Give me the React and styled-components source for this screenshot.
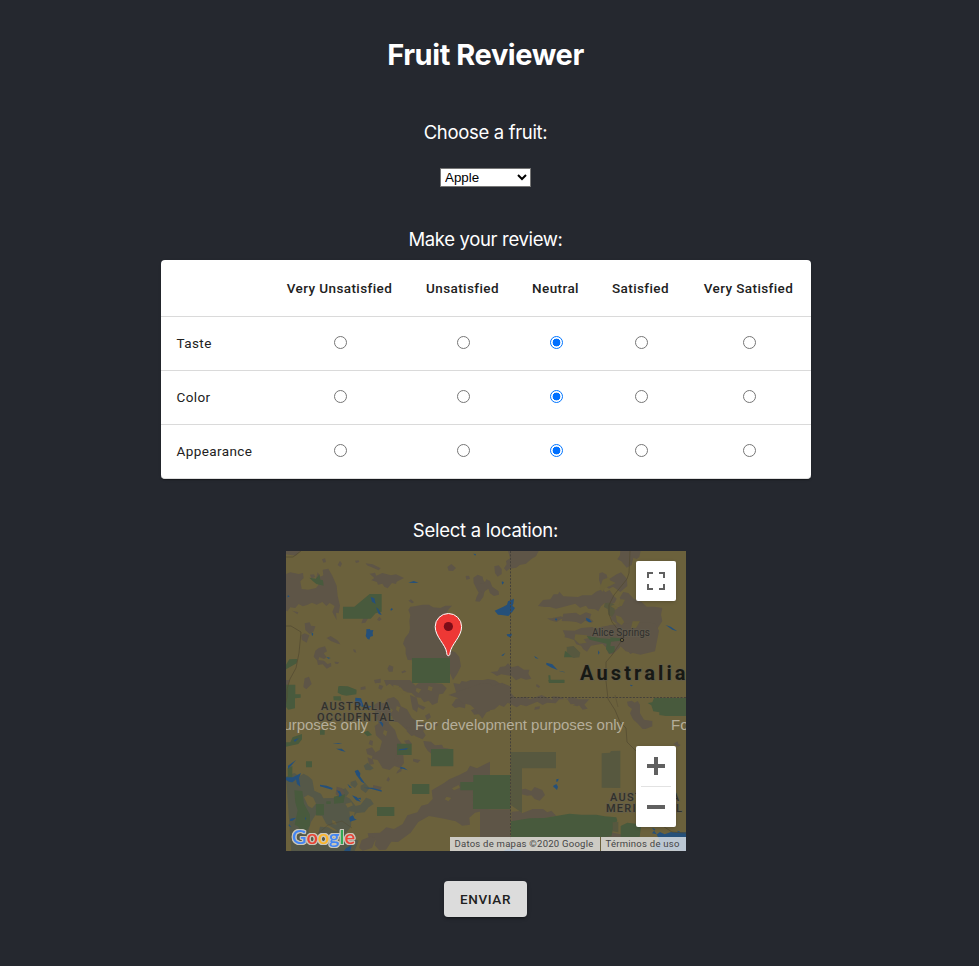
import React, { useState } from 'react';
import styled, { createGlobalStyle } from 'styled-components';

const GlobalStyle = createGlobalStyle`
  * { box-sizing: border-box; }
  html, body { margin: 0; background: #25282f; }
`;

const Page = styled.main`
  width: 971px;
  height: 966px;
  padding-top: 36px;
  display: flex;
  flex-direction: column;
  align-items: center;
  color: #fff;
  background: #25282f;
  font-family: Inter, sans-serif;
`;

const Title = styled.h1`
  margin: 0;
  height: 38px;
  font-size: 29px;
  line-height: 38px;
  font-weight: 700;
  letter-spacing: -0.42px;
  white-space: nowrap;
`;

const Label = styled.h2`
  margin: ${(p) => p.$top}px 0 0;
  height: 24px;
  font-size: 18.5px;
  line-height: 23px;
  font-weight: 400;
  letter-spacing: ${(p) => p.$tracking}px;
  white-space: nowrap;
`;

const FruitSelect = styled.select`
  width: 91px;
  height: 19px;
  margin-top: 23px;
  padding: 0;
  border: 1px solid #767676;
  border-radius: 0;
  background: #fff;
  color: #000;
  font: 13.333px "Liberation Sans", Arial, sans-serif;
`;

const Card = styled.div`
  width: 650px;
  height: 219px;
  margin: 8px 0 0 1px;
  overflow: hidden;
  border-radius: 4px;
  border-bottom: 1px solid #dedede;
  background: #fff;
  box-shadow: 0 2px 1px -1px rgba(0, 0, 0, 0.2), 0 1px 1px rgba(0, 0, 0, 0.14),
    0 1px 3px rgba(0, 0, 0, 0.12);
`;

const ReviewRow = styled.div`
  display: grid;
  grid-template-columns: 109px 139px 107px 79px 91px 125px;
  align-items: center;
  height: ${(p) => (p.$head ? 56 : 54)}px;
  border-top: ${(p) => (p.$head ? 'none' : '1px solid #dadada')};
  color: #212121;
  font-family: Roboto, sans-serif;
  font-size: 13.500px;
  line-height: 20px;
  letter-spacing: ${(p) => (p.$head ? 0.4 : 0.41)}px;
  font-weight: ${(p) => (p.$head ? 500 : 400)};
  text-align: center;
`;

const RowName = styled.span`
  padding: 0 0 1px 15.500px;
  text-align: left;
`;

const Radio = styled.input`
  appearance: none;
  display: block;
  width: 13px;
  height: 13px;
  margin: 0 auto;
  position: relative;
  top: -1px;
  left: 1px;
  border: 1px solid #767676;
  border-radius: 50%;
  background: #fff;
  &:checked {
    border-color: #0075ff;
    background: radial-gradient(circle, #0070ff 3.6px, #fff 4.2px);
  }
`;

const MapFrame = styled.div`
  position: relative;
  width: 400px;
  height: 300px;
  margin: 8px 0 0 1px;
  overflow: hidden;
  background: #6b613c;
`;

const MapCanvas = styled.svg`
  display: block;
`;

const LogoText = styled.text`
  font: 600 20px Lato, sans-serif;
  filter: drop-shadow(1px 0 0 #c9c6bb) drop-shadow(-1px 0 0 #c9c6bb)
    drop-shadow(0 1px 0 #c9c6bb) drop-shadow(0 -1px 0 #c9c6bb);
`;

const MapControl = styled.div`
  position: absolute;
  right: 10px;
  top: ${(p) => p.$top}px;
  width: 40px;
  display: flex;
  flex-direction: column;
  align-items: center;
  border-radius: 2px;
  background: #fff;
  box-shadow: 0 1px 4px -1px rgba(0, 0, 0, 0.3);
`;

const ControlButton = styled.button`
  width: 40px;
  height: 40px;
  padding: 0;
  border: 0;
  background: none;
  display: flex;
  align-items: center;
  justify-content: center;
`;

const ControlDivider = styled.span`
  width: 30px;
  height: 1px;
  background: #e2e2e2;
`;

const Attribution = styled.div`
  position: absolute;
  right: 0;
  bottom: 0;
  height: 14px;
  width: 236px;
  display: flex;
  background: rgba(238, 239, 241, 0.75);
  color: #444;
  font: 9.500px/14px Roboto, sans-serif;
  white-space: nowrap;
`;

const Credit = styled.span`
  width: ${(p) => p.$width}px;
  padding-left: 4.500px;
  letter-spacing: 0.250px;
  border-left: ${(p) => (p.$ruled ? '1px solid #6b613c' : 'none')};
`;

const SubmitButton = styled.button`
  width: 83px;
  height: 36px;
  margin-top: 30px;
  padding: 0;
  border: 0;
  border-radius: 4px;
  background: #dcdcdc;
  color: #212121;
  font: 500 13.500px/36px Roboto, sans-serif;
  letter-spacing: 0.65px;
  box-shadow: 0 3px 1px -2px rgba(0, 0, 0, 0.2), 0 2px 2px rgba(0, 0, 0, 0.14),
    0 1px 5px rgba(0, 0, 0, 0.12);
`;

const MAUVE = '#5e5547';
const GREEN = '#485a3d';
const WATER = '#25507a';
const SAGE = '#57583f';
const SLATE = '#555848';

/* Each tile is drawn on a 630x540 grid at three units per map pixel. */
const TILES = {
  nw: 'translate(-6 -41) scale(.33333)',
  ne: 'translate(194 -41) scale(.33333)',
  sw: 'translate(-6 129) scale(.33333)',
  se: 'translate(194 129) scale(.33333)',
};

const SHAPES = {
  nw: [
    [MAUVE, 'M18 123h43l-13 14-30-4zM18 192l13-5 25 5 13-3 2 15-10 10 4 23 20 2 23-5 8-10-9-15 6-22 9 13 8-4-2-17 17-3 12 21 13 30 3 31 7 29-4 23-8-2 2 23-13-25 7-18-15-9-10 9-12-12-17 8-14-6-15 7-13 4-12-7-10 12-15-2-9 12-18-8z'],
    [MAUVE, 'M257 160l21 3 24 12-6 6-35-15zM269 191l16-3 4 9 18-8 26 7 15-3 24 11-22 11-2 7-12-3-13 16-10-5-6-9-13 3-3-8-17-5 9-7zM502 171l12-9 14 12-9 9-13-1zM557 198l10-1 3 9-11 3zM580 203l13-9 15 6 2 10 8 11-4 22-4 17-11 15-13-1 4-14 6-12-8-15-7-14zM385 272l8-4 9 9-6 3z'],
    [MAUVE, 'M404 289l24-5 19 0 12 8 22 2 15-7 20 0-10 11-7 11-15 12-8 38 8 26 15 20 15 18-1 19-12 11-118-3-6-19 0-17-8-13 6-17 12-16 3-13-2-22 3-18-6-15 6-10zM509 420l17 7 12 14 5 28-12 24-12 17-11-25-16-15 7-22z'],
    [MAUVE, 'M74 340l15-3 4 10 13 2-5 15-12 8-13-12zM64 375l10-5 14 6-8 22-15-9zM106 422l10-8 19-5 6 15-10 6 9 12-8 5-14-6-3 9 17 2 10 10 11-3 1 10-14 7-12-13-14 2-3-14-10-11zM140 384l12-6 22 14 7 11-8-2-20-8zM328 465l12 5-2 15-11 0-5-9zM37 302l18 5-3 6zM74 505l13-5 8 22-16 16-9-7zM364 485l10-4 5 4-12 5zM180 152l6 9-5 10-8-6zM90 194l12-1 4 8-12 4zM126 148l9-3 3 11-8 2zM225 152l11-1 2 5-10 3zM163 455l14 1-3 6-8-1zM250 323l15 1-9 14-12 2zM298 320l7 8-7 5-7-4zM282 510l20-4 0 12-17 2zM242 532l14-3 1 9-15 2zM219 418l7 1 3 9-7-2z'],
    [GREEN, 'M189 290h34l46-38h36v53l-18 5-15 16h-83zM396 444h114v75H396zM88 203l20 3 10-13 3 16 8 2 2 16-22-5-10-8zM18 464l10-16 24-1-2 13-32 18zM30 526h15v14H26zM178 528l25 1 28 11h-57z'],
    [WATER, 'M259 358l11-1 1 4 9-1-2 8 1 10-8 2-3 9-6-3-5-8 2-10zM272 261l11 4 4 17-11-7zM288 292l7 5 10 18-9-3zM335 294l4 4-6 4-2-3zM385 218l16-5 15 5-13 1zM95 367l5 4-2 7-3-3zM580 131l8 1-2 5zM24 255l5 5-7 2zM140 441l12 3-7 2z'],
  ],
  ne: [
    [MAUVE, 'M84 123h92l-8 16-14 8-16 14-19 4-10 8-21 3-8 8-8-9 8-12-2-10 12-8-3-12zM43 169l13-3 9 11 0 15-12 8-8-11zM0 220l13 1 6-13 11 5 7 17 19 14 1 10-15 4-12-8-5-14-17 12-8-6zM421 123h61l-4 18-8 6-10-4-5 22-15 8-16-19-12-6 8-12zM358 190l9-3 13 7 4 15 18-11 8-5 13-6 18 19 1 22-21 18-9-7-13-9-12 6-14-10-10 2-6-18z'],
    [MAUVE, 'M174 288l15-18 22-2 10-15 13 0 4-8 12 14 44 2 13-5 28 0 13-11 20-8 8 10 13-7 10 16 11 10-6 12-17 6-13-5-11 10-8 15-10-6-20-2-7-9-18 6-14-12-37 10-21 5-18-5-16 0zM430 246l15 3 16 17 24 10 15 14 25 0 22 4-4 20 4 19-19 30-2 14-9 20-10 25-34 0-22 10-9-11 4-17-16-11-15-21-1-28-20-15-1-16 11-20 15-3 8-14-8-13z'],
    [MAUVE, 'M250 311l38-3 12 8 18-9 16 5-4 13 10 9-6 5-19-7-12 10-14-6-22-2-22-1zM201 325l13 0 29-6 7 4-20 13-19-5zM248 361l36 1 20-8 33-3 10 7 18-8 29-5 12 10 22-1 11 12 10 9-2 12-16 9-12 17-21 20-12-1-7-19-12-12-34 6-12 18-11-7-7-11-14-4-7-13-15-5-13-3 1-6zM60 471l16-2 8-9 11 12 19-5 18 12 16 0-3 12 9 15-16 3-15-5-15 7-13-13-14-2-17-3-13 5-10-7-10-5 22-2zM0 512l24-5 21 4 22 14 2 15H0zM385 346l90-10 50 4 12 22-12 62-44 10-44-10-30-30z'],
    ['#696039', 'M384 292l18-6 13 7-10 7-16 1zM407 316l16 5 10 15-8 10-14-11zM458 334l22 0-12 20-15 1zM286 373l34 3 6 8-15 4 9 10-22 3-15-13zM368 209l19-7 3 9 17 8-16 8-16 7-7 11-9-9zM423 268l12 1-10 20-9-3z'],
    [GREEN, 'M320 378l18 2 25 5 28 2 0-5 30 3 0 7-28 3-2 14 13-1 0 18-16 5-10-14 2-16-51-12zM255 423l19 9 10 10h-32zM205 496h6l1 13h41v10h-46z'],
    [SAGE, 'M374 280l14-2 16 5-12 6 12 7 0 12-8 12-10-5-3-18-11-6zM260 411l21-3 20 20-3 14-18 2-19-17z'],
    [WATER, 'M44 302l26-12 11-6 3-10 18-8-2 16-3 5 8 7-8 12-12 12-20-3-11-1zM66 214l6 3-4 7-3-5zM318 323l10 4 7 9-8 1-8-6zM227 325l5 2-3 5-4-3zM354 421l5 7-4 6zM162 437l14 9-9-1zM199 458l18 5 16 17-18-7-16-9zM64 436l12-7-7 9zM235 482l23 5-11-1zM80 373l16-2-4 12-10-5zM557 345l15 5 20 14-15-5zM450 524l9 3-6 2z'],
  ],
  sw: [
    [SLATE, 'M18 290l25-11 15 10 13-8 14 8 12 11 6 32 20 9 7 14 31-1 22-12 27 14 17 22 15-4 16-21 14 5 9 14-15 10-12 15-24 2-16 19-1 22-16 20-19-1-13-12-26-15-13-25-20-1-13 20-8 27 16 26-4 53-62 0z'],
    [SLATE, 'M251 257l12-9 18 17-10 6-14-1zM212 306l15-5 6 12-8 11-13-9zM242 317l14-7 13 14-12 15-15-11zM181 330l16-5 10 14-9 11-15-7zM120 440l24 2 18 10 24 2 22 16 28 12-12 31H90l20-30z'],
    ['#6b613c', 'M72 352l12-7 16 8 8 18-12 14-12-8zM106 318l8 5-4 9zM196 372l18-5 5 9-16 7zM208 394l16 2-2 12-12 3zM156 420l10 4 4 10-12-2z'],
    [MAUVE, 'M18 0h12l-8 17-4 7zM282 75l12-8 20 3 8-14 20-5 13 11 8 17 18 9 15 26 20 14 21 2 8 13-16 9 8 14-9 12-22-9-11-14-18-7-10-10-14-12-12-1-5-17-12-2 3 25 18 19 8 25 12 16-9 25 14 10 2 23-12 15-17-6-14 12-21-5-15-25-17-3 2-15 21-12 7-27-18-17-4-28 12-8-10-26zM312 0h78l16 17 15-12 65 6 14 14-11 16-12 2-4 25-16 7-11-13-14 5-10-14-14-1-13-13-21-3-12-14-22-2-11-9-10 7z'],
    [MAUVE, 'M390 45l20 8 5 20 22 9-7 8-16-9-3 16-13-9-4-20zM435 107l13-8 5 13-12 9zM430 183l23 2 12 11 21-2 4 9 18 3 9 13-20 9-16-12-22 10-16-14-9-14zM528 56l14 0 15 13-2 16-17-4-13 3-10-9zM520 9l19 3 6-9 14 2 12-5h59v93l-24 8-23 3-10-13 16-8 8-13-22-19-17 10-11-16-17-2zM455 331l36-21 17-12 31-14 22-11 9-16 21 8 39-20v143l-45 10-17 15 2 21-23 3-20-13-42-9-38-7-32 18-23 32-38 28-20-1-16 24-21 1-13-14 3-15-21-8-3-13 37-2 19-16 23 5 26-15 14-26 30-9 12-20 20-5 14-15z'],
    [MAUVE, 'M170 320l17 5 9 21-13 8-16-11zM270 180l9 3-2 14-11-5zM325 290l5 8-5 7-6-4zM280 315l25 6-4 9-23-5zM245 480l30-12 12 10-11 26-28 8-11-9zM352 274l15-15-3 15-15 7zM298 14l12 4-6 12-9-5zM258 208l18-6 10 14-9 12-15-5zM262 232l16 6 4 14-14 2zM380 140l12 6 16 18-14 4-14-14zM372 182l14-3 10 12-12 8zM400 236l22 4-9 9-14-5zM460 130l10-3 4 9-9 4zM498 120l14 5-8 8-9-5zM346 226l10 6-5 14-9-8z'],
    ['#6b613c', 'M340 14l18 4-6 9-12-3zM362 30l20 6-14 8zM410 24l14 4-8 12-9-7zM446 18l12 4-3 12-12-5zM350 78l10 4-4 14-8-7zM304 96l12 8-5 10-9-7zM312 150l10 4-4 15-9-8zM330 84l9 6-6 9zM516 325l20-10 4 8-18 8zM500 350l14 4-9 10-11-6z'],
    [GREEN, 'M396 0h114v9H396zM175 19l20 2 9 0 26 10-1 12-30 4-14-3-12-6zM160 49l22 0 2 13-23-1zM18 14h28v29l16 0 0 10-17 2 0 30-20 4-7-8zM18 187l13 0 7-15 28-10 0 16-11 14-37 8zM351 191h44v34h-44zM453 207h67v52h-67zM396 312h52v30h-52zM291 381h52v27h-52zM541 306h39v-21h50v102h-51v-56h-38zM78 244h18v18H78zM23 265l14-7 0 46-13 1zM43 331l24 2 5 38 18 33 0 32-18 27-18-24-10-5 9-43-7-23zM108 372h24v34h-24zM162 350l33-7-4 25-29 3zM139 364h13v8h-13zM120 151l14-2 0 15h-14zM250 157l14-5 12 13-14 4z'],
    [WATER, 'M18 292l21 0 24-13-6 15 4 26-10-8-3-14-10 9-9-1-11-6zM24 257l24-17-15 18-9 8zM41 180l16-6-12 12zM224 273l10-4 7 11-1 9 16 23-12-7-15-20zM120 314l20 3 18 7-2 5-36-10zM170 331l10 3 6 12-10 6 2-9zM202 311l14 12-7 0zM216 346l14 5 13 15-15-5zM232 354l10-1 1 6zM251 323l25 0 29 8 0 4-30-8zM209 411l9-5 6 10 6 3-11 3-8 3-3-7zM157 189l30 1-12 2zM168 206l17 0 12 9-12-2zM226 53l17 2 7 20 25 4-15 10-23-14-12 1zM300 119l10 13-2 9-10-15zM358 208l26-4-5 5-24 2zM361 260l12 3 10 8-14-5-8 0zM31 416l17-3-10 9-8 1zM75 410l4 7-4 2zM198 505l17-10-4 18-19 0zM27 431l7 11-8-4z'],
  ],
  se: [
    [MAUVE, 'M0 11l30-1 6 9 30-11 29 13-4 16 16 18 31-5 11 8 36-13 32 15 0-11 22 1 15 8 25-7 17 7 32 0-15 16 10 12-15 3-14-18-22 2-10-15-24 0-11 12-26-2-13 7-16-10-33 14-17-5-12 8-27-14-11 13-14-6-14 13-22 4-15 24-20-27-16-14-22-5-18-17-25-8zM441 65l14-3 9 6 9-5 7 11 0 26 12 19 25 4 0 16-20 8-9 0-16-17-13-12-9-18 6-13-12-10zM100 339l14-9 22-4 18 7 10-12 23 9 8 15-16 17-15-5-10-11-12 1-20-5-17 2zM0 388h91v83H0zM126 400l32-13 31 0 13 10 12-5 15 16-30 5-37 7-68 9v-34l29-2zM250 467l74 0-10 4h-59zM345 462l55-4 35 8v5h-91zM580 192l13-8 2 8 7 3-8 5zM170 12l10 7-3 5-9-5zM165 81l15-2-2 8-15 2zM279 76l13-8 15 3-15 8z'],
    [GREEN, 'M0 285h91v102H0zM205 0h48v8h-46zM618 54v54h-60l-20-3 0-8-18-3-6-18-11-7 14-2 5-13zM93 471v-47l56-9 44-1 75-13 36 3 45 0 25 5 35 3 3 10-10 14-8 33-20 2zM422 438l20-10 25 3 16 10-4 30h-57zM545 468l21-6 0 9h-21z'],
    [SAGE, 'M93 216h135v49H126v133l-33-22zM365 220l25-2 3-5 28-1v112l-56-1zM398 427l17-2 0 32-17-3z'],
    [WATER, 'M229 298l7-2-2 8-5 2zM220 317l9-5 5 8-3 10-7-7-4-2zM516 443l10 5-10 12 15 3 9-7 14 7 19-7 45 1v56l-100-4 20-28-8-18zM592 452l8 2-5 6zM452 14l6 3-5 1zM70 513l20-10 20 4 15 6z'],
  ],
};

function Terrain({ tile }) {
  return (
    <g transform={TILES[tile]}>
      {SHAPES[tile].map(([fill, d], i) => (
        <path key={i} fill={fill} d={d} />
      ))}
    </g>
  );
}

function LocationMap() {
  const halo = { stroke: '#625d51', strokeWidth: 2, strokeOpacity: 0.55, paintOrder: 'stroke' };
  return (
    <MapFrame>
      <MapCanvas width="400" height="300" viewBox="0 0 400 300">
        <rect width="400" height="300" fill="#6b613c" />
        <Terrain tile="nw" />
        <Terrain tile="ne" />
        <Terrain tile="sw" />
        <Terrain tile="se" />
        <g fill="none" stroke="#514930" strokeWidth=".7">
          <path d="M0 6h7l8-6M0 75h5l10 6-2 21-3 15-6 11-3 10v8l-2 9" />
          <path d="M344 0l-1 22-2 6-13 16-5 10v9l3 8 7 9 3 9-10 15-6 7v19l2 18 7 11 5 12 6 6 1 14 12 12 16 20M366 268l20 13 14 1" />
          <path d="M30 284l12-10 14-4 10 7M329 144l3 12" opacity=".6" />
        </g>
        <g fill="none" stroke="#45413a" strokeWidth="1" strokeDasharray="2 1.4">
          <path d="M224.5 0v300M224.5 146.5H400" />
        </g>
        <g fontFamily="Roboto, sans-serif" fill="#30302c">
          <text x="306" y="84.5" fontSize="10" textLength="58" {...halo}>Alice Springs</text>
          <circle cx="336" cy="89" r="1.7" fill="#6b613c" stroke="#292925" />
          <text x="294" y="129" fontSize="20" fontWeight="700" fill="#171914" textLength="105.5" {...halo}>Australia</text>
          <g fontSize="11" fontWeight="500" {...halo}>
            <text x="35" y="159" textLength="69">AUSTRALIA</text>
            <text x="31" y="169.8" textLength="77">OCCIDENTAL</text>
            <text x="324" y="250" textLength="69">AUSTRALIA</text>
            <text x="320" y="261" textLength="76">MERIDIONAL</text>
          </g>
        </g>
        <g fontFamily="Liberation Sans, Arial, sans-serif" fontSize="15" fill="#b5ae9a">
          <text x="-127" y="179" textLength="209">For development purposes only</text>
          <text x="129" y="179" textLength="209">For development purposes only</text>
          <text x="385" y="179" textLength="209">For development purposes only</text>
        </g>
        <g>
          <path d="M162.4 104.7c-1.2 0-1.5-1-1.7-3-.8-8-11.5-15.8-11.5-26a13.2 13.2 0 0 1 26.4 0c0 10.200-10.700 18-11.500 26-.2 2-.5 3-1.700 3z" fill="#ee3835" stroke="#fff" strokeWidth="1" />
          <circle cx="162.400" cy="75.500" r="4.600" fill="#7c0c18" />
        </g>
        <LogoText x="6" y="293" textLength="63" lengthAdjust="spacingAndGlyphs">
          <tspan fill="#4285f4">G</tspan>
          <tspan fill="#ea4335">o</tspan>
          <tspan fill="#fbb52a">o</tspan>
          <tspan fill="#4285f4">g</tspan>
          <tspan fill="#34a853">l</tspan>
          <tspan fill="#ea4335">e</tspan>
        </LogoText>
      </MapCanvas>
      <MapControl $top={10}>
        <ControlButton aria-label="Fullscreen">
          <svg width="18" height="18" viewBox="0 0 18 18" fill="none" stroke="#606060" strokeWidth="2">
            <path d="M1 6V1h5M12 1h5v5M17 12v5h-5M6 17H1v-5" />
          </svg>
        </ControlButton>
      </MapControl>
      <MapControl $top={195}>
        <ControlButton aria-label="Zoom in">
          <svg width="18" height="18" viewBox="0 0 18 18" fill="#606060">
            <path d="M7 0h4v7h7v4h-7v7H7v-7H0V7h7z" />
          </svg>
        </ControlButton>
        <ControlDivider />
        <ControlButton aria-label="Zoom out">
          <svg width="18" height="18" viewBox="0 0 18 18" fill="#606060">
            <path d="M0 7h18v4H0z" />
          </svg>
        </ControlButton>
      </MapControl>
      <Attribution>
        <Credit $width={150}>Datos de mapas ©2020 Google</Credit>
        <Credit $width={86} $ruled>Términos de uso</Credit>
      </Attribution>
    </MapFrame>
  );
}

const RATINGS = ['Very Unsatisfied', 'Unsatisfied', 'Neutral', 'Satisfied', 'Very Satisfied'];
const ASPECTS = ['Taste', 'Color', 'Appearance'];

export default function App() {
  const [scores, setScores] = useState({ Taste: 2, Color: 2, Appearance: 2 });
  return (
    <>
      <GlobalStyle />
      <Page>
        <Title>Fruit Reviewer</Title>
        <Label $top={47} $tracking={-0.33}>Choose a fruit:</Label>
        <FruitSelect defaultValue="Apple">
          <option>Apple</option>
          <option>Banana</option>
          <option>Orange</option>
        </FruitSelect>
        <Label $top={41} $tracking={-0.34}>Make your review:</Label>
        <Card>
          <ReviewRow $head>
            <span />
            {RATINGS.map((rating) => (
              <span key={rating}>{rating}</span>
            ))}
          </ReviewRow>
          {ASPECTS.map((aspect) => (
            <ReviewRow key={aspect}>
              <RowName>{aspect}</RowName>
              {RATINGS.map((rating, i) => (
                <Radio
                  key={rating}
                  type="radio"
                  name={aspect}
                  aria-label={`${aspect}: ${rating}`}
                  checked={scores[aspect] === i}
                  onChange={() => setScores({ ...scores, [aspect]: i })}
                />
              ))}
            </ReviewRow>
          ))}
        </Card>
        <Label $top={40} $tracking={-0.26}>Select a location:</Label>
        <LocationMap />
        <SubmitButton>ENVIAR</SubmitButton>
      </Page>
    </>
  );
}
